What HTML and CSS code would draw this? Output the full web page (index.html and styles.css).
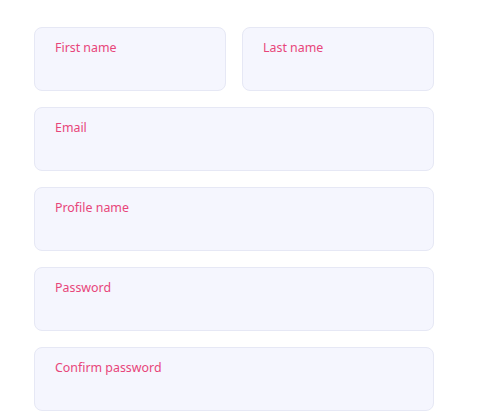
FILE: index.html
```html
<!DOCTYPE html>
<html>
<head>
<meta charset="utf-8">
<link rel="stylesheet" href="styles.css">
</head>
<body>
<form class="form">
  <div class="row two">
    <label class="field"><span class="label">First name</span></label>
    <label class="field"><span class="label">Last name</span></label>
  </div>
  <label class="field"><span class="label">Email</span></label>
  <label class="field"><span class="label">Profile name</span></label>
  <label class="field"><span class="label">Password</span></label>
  <label class="field"><span class="label">Confirm password</span></label>
</form>
</body>
</html>
```
FILE: styles.css
```css
html, body { margin: 0; padding: 0; background: #fff; }
body { font-family: "Noto Sans", "Open Sans", sans-serif; }
.form {
  width: 400px;
  margin: 27px 0 0 34px;
  display: flex;
  flex-direction: column;
  gap: 16px;
}
.row.two {
  display: grid;
  grid-template-columns: 1fr 1fr;
  gap: 16px;
}
.field {
  display: block;
  box-sizing: border-box;
  height: 64px;
  padding: 11px 20px;
  background: #f5f6fe;
  border: 1px solid #e6e8f5;
  border-radius: 8px;
}
.label {
  display: block;
  font-size: 12.4px;
  line-height: 18px;
  color: #e8457a;
}
```
